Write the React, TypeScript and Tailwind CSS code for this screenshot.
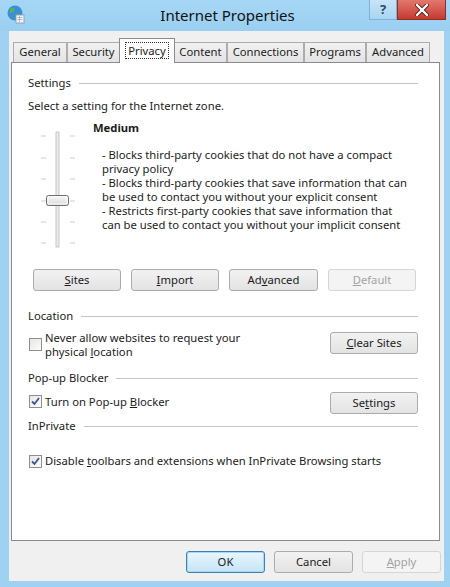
import React from "react";

const font = "font-['Noto_Sans',_'Open_Sans',_sans-serif]";

function Btn({ children, w = "w-[88px]", disabled = false, primary = false }: { children: React.ReactNode; w?: string; disabled?: boolean; primary?: boolean }) {
    let cls = "border-[#acacac] bg-gradient-to-b from-[#f2f2f2] to-[#e3e3e3] text-[#1a1a1a]";
    if (disabled) cls = "border-[#d5d5d5] bg-[#f4f4f4] text-[#a3a3a3]";
    if (primary) cls = "border-[#3c7fb1] bg-gradient-to-b from-[#eaf6fd] to-[#c4e5f6] text-[#1a1a1a] shadow-[inset_0_0_0_1px_#a7d8f4]";
    return (
        <div className={`${w} h-[22px] shrink-0 rounded-[3px] border flex items-center justify-center ${cls}`}>
            {children}
        </div>
    );
}

function Group({ label }: { label: string }) {
    return (
        <div className="flex items-center h-[15px]">
            <span>{label}</span>
            <div className="ml-[8px] flex-1 h-px bg-[#c4c4c4]" />
        </div>
    );
}

function Check({ checked = false }: { checked?: boolean }) {
    return (
        <div className="w-[13px] h-[13px] shrink-0 border border-[#8e8f8f] bg-gradient-to-br from-[#e6e6e6] to-[#fdfdfd] flex items-center justify-center">
            {checked && (
                <svg width="9" height="9" viewBox="0 0 9 9">
                    <path d="M1 4.5 L3.5 7 L8 1" fill="none" stroke="#3d5490" strokeWidth="1.8" />
                </svg>
            )}
        </div>
    );
}

function Slider() {
    const ticks = [16, 38, 59, 81, 102, 123];
    return (
        <svg width="65" height="137" viewBox="0 0 65 137" className="shrink-0">
            <defs>
                <linearGradient id="thumb" x1="0" y1="0" x2="0" y2="1">
                    <stop offset="0" stopColor="#f7f7f7" />
                    <stop offset="1" stopColor="#dadada" />
                </linearGradient>
            </defs>
            {ticks.map((y) => (
                <g key={y}>
                    <line x1="13" x2="18" y1={y} y2={y} stroke="#cfcfcf" />
                    <line x1="42" x2="47" y1={y} y2={y} stroke="#cfcfcf" />
                </g>
            ))}
            <rect x="28" y="12" width="3" height="115" fill="#ededed" stroke="#b9b9b9" strokeWidth="0.8" />
            <rect x="18.5" y="75.5" width="22" height="10" rx="2" fill="url(#thumb)" stroke="#6f6f6f" />
            <rect x="20" y="77" width="19" height="7" rx="1" fill="none" stroke="#ffffff" strokeWidth="0.8" />
        </svg>
    );
}

const tabs = [
    { name: "General", w: "w-[54px]" },
    { name: "Security", w: "w-[53px]" },
    { name: "Privacy", w: "w-[56px]", active: true },
    { name: "Content", w: "w-[53px]" },
    { name: "Connections", w: "w-[77px]" },
    { name: "Programs", w: "w-[62px]" },
    { name: "Advanced", w: "w-[64px]" },
];

export default function App() {
    return (
        <div className={`w-[450px] h-[587px] bg-[#9fd1f1] flex flex-col ${font} text-[11.25px] text-[#1c1c1c] overflow-hidden`}>
            {/* Title bar */}
            <div className="h-[31px] shrink-0 flex items-start bg-gradient-to-b from-[#a6d6f5] to-[#9acff1]">
                <svg width="20" height="20" viewBox="0 0 20 20" className="mt-[4px] ml-[6px] shrink-0">
                    <circle cx="9" cy="9" r="7.5" fill="#3a8fd6" />
                    <path d="M4 5 Q7 3 9 5 Q8 8 5 9 Q3 8 4 5Z" fill="#4fb84a" />
                    <path d="M10 10 Q13 9 14 12 Q12 15 9 15 Q9 12 10 10Z" fill="#4fb84a" />
                    <rect x="10" y="11" width="8" height="8" fill="#f4f4f4" stroke="#8a9aa8" strokeWidth="0.8" />
                    <line x1="11.5" y1="13.5" x2="16.5" y2="13.5" stroke="#9aa" strokeWidth="0.7" />
                    <line x1="11.5" y1="15.5" x2="16.5" y2="15.5" stroke="#9aa" strokeWidth="0.7" />
                    <line x1="13.5" y1="12" x2="13.5" y2="18" stroke="#9aa" strokeWidth="0.7" />
                </svg>
                <div className="flex-1 h-[30px] flex items-center justify-center text-[15px] text-[#111] pl-[60px]">
                    Internet Properties
                </div>
                <div className="w-[28px] h-[20px] shrink-0 border border-[#7ab2d9] border-t-0 bg-gradient-to-b from-[#c6e4f7] to-[#a9d5f2] flex items-center justify-center text-[13px] font-bold text-[#2e4a64]">
                    ?
                </div>
                <div className="w-[49px] h-[20px] shrink-0 mr-[4px] border border-[#8f2d27] border-t-0 bg-gradient-to-b from-[#e2776e] to-[#c4392f] flex items-center justify-center">
                    <svg width="14" height="12" viewBox="0 0 14 12">
                        <path d="M2 1 L12 11 M12 1 L2 11" stroke="#5a1a16" strokeWidth="4" strokeLinecap="round" />
                        <path d="M2 1 L12 11 M12 1 L2 11" stroke="#ffffff" strokeWidth="2.4" strokeLinecap="round" />
                    </svg>
                </div>
            </div>

            {/* Body */}
            <div className="flex-1 ml-[9px] mr-[6px] bg-[#f0f0f0] flex flex-col">
                {/* Tabs */}
                <div className="h-[31px] flex items-end pl-[4px] shrink-0">
                    {tabs.map((t) =>
                        t.active ? (
                            <div key={t.name} className={`${t.w} h-[25px] -mx-[1px] -mb-px z-10 bg-white border border-b-0 border-[#898c95] flex items-start justify-center pt-[3px]`}>
                                <span className="px-[2px] leading-[15px] border border-dotted border-[#333]">{t.name}</span>
                            </div>
                        ) : (
                            <div key={t.name} className={`${t.w} h-[20px] bg-gradient-to-b from-[#f1f1f1] to-[#e3e3e3] border border-b-0 border-[#acacac] flex items-center justify-center`}>
                                {t.name}
                            </div>
                        )
                    )}
                </div>

                {/* Panel */}
                <div className="h-[479px] shrink-0 ml-[2px] mr-[4px] bg-white border border-[#898c95] pt-[13px] pl-[16px] pr-[21px] flex flex-col">
                    <Group label="Settings" />
                    <div className="mt-[7px] h-[15px] leading-[15px]">Select a setting for the Internet zone.</div>
                    <div className="mt-[7px] flex">
                        <Slider />
                        <div className="flex flex-col">
                            <div className="h-[15px] leading-[15px] font-bold">Medium</div>
                            <div className="mt-[13px] pl-[9px] leading-[14px]">
                                <div>- Blocks third-party cookies that do not have a compact</div>
                                <div>privacy policy</div>
                                <div>- Blocks third-party cookies that save information that can</div>
                                <div>be used to contact you without your explicit consent</div>
                                <div>- Restricts first-party cookies that save information that</div>
                                <div>can be used to contact you without your implicit consent</div>
                            </div>
                        </div>
                    </div>
                    <div className="mt-[12px] ml-[5px] flex gap-[10px]">
                        <Btn><span className="underline">S</span>ites</Btn>
                        <Btn><span className="underline">I</span>mport</Btn>
                        <Btn w="w-[89px]">Ad<span className="underline">v</span>anced</Btn>
                        <Btn disabled><span className="underline">D</span>efault</Btn>
                    </div>

                    <div className="mt-[18px]"><Group label="Location" /></div>
                    <div className="mt-[7px] flex items-start justify-between">
                        <div className="flex items-start pl-[1px]">
                            <div className="mt-[7px]"><Check /></div>
                            <div className="ml-[3px] leading-[14px]">
                                <div>Never allow websites to request your</div>
                                <div>physical <span className="underline">l</span>ocation</div>
                            </div>
                        </div>
                        <div className="mt-[1px]"><Btn><span className="underline">C</span>lear Sites</Btn></div>
                    </div>

                    <div className="mt-[12px]"><Group label="Pop-up Blocker" /></div>
                    <div className="mt-[6px] flex items-center justify-between">
                        <div className="flex items-center pl-[1px] -mt-[3px]">
                            <Check checked />
                            <div className="ml-[3px] leading-[14px]">Turn on Pop-up <span className="underline">B</span>locker</div>
                        </div>
                        <Btn>Se<span className="underline">t</span>tings</Btn>
                    </div>

                    <div className="mt-[5px]"><Group label="InPrivate" /></div>
                    <div className="mt-[20px] flex items-center pl-[1px]">
                        <Check checked />
                        <div className="ml-[3px] leading-[14px]">Disable <span className="underline">t</span>oolbars and extensions when InPrivate Browsing starts</div>
                    </div>
                </div>

                {/* Dialog buttons */}
                <div className="mt-[10px] flex justify-end gap-[9px] pr-[3px]">
                    <Btn w="w-[79px]" primary>OK</Btn>
                    <Btn w="w-[79px]">Cancel</Btn>
                    <Btn w="w-[79px]" disabled><span className="underline">A</span>pply</Btn>
                </div>
            </div>
            <div className="h-[6px] shrink-0" />
        </div>
    );
}
